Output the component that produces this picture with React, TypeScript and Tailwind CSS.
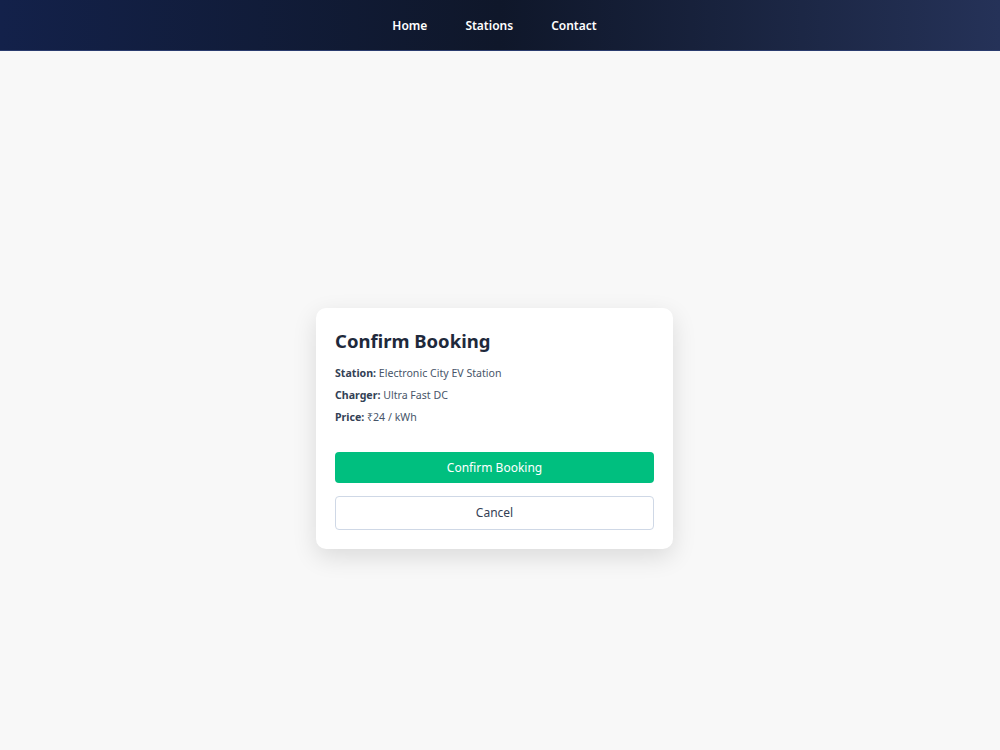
import React from 'react';

const navLinks = ['Home', 'Stations', 'Contact'];

const Navbar: React.FC = () => (
  <header className="h-[51px] w-full bg-gradient-to-r from-[#13214a] via-[#0f172a] to-[#253258] border-b border-[#2a3b6e]">
    <nav className="flex h-full items-center justify-center gap-[38px] pr-[11px] pt-[2px]">
      {navLinks.map((link) => (
        <a key={link} href="#" className="text-[12px] font-semibold text-white">
          {link}
        </a>
      ))}
    </nav>
  </header>
);

const BookingModal: React.FC = () => (
  <div className="w-[357px] rounded-[10px] bg-white p-[19px] shadow-[0_8px_24px_rgba(0,0,0,0.12)]">
    <h2 className="text-[18.5px] font-bold leading-[28px] text-[#1e293b]">Confirm Booking</h2>
    <div className="mt-[7px] text-[10.6px] leading-[22px] text-[#475569]">
      <p>
        <span className="font-bold text-[#334155]">Station:</span> Electronic City EV Station
      </p>
      <p>
        <span className="font-bold text-[#334155]">Charger:</span> Ultra Fast DC
      </p>
      <p>
        <span className="font-bold text-[#334155]">Price:</span> ₹24 / kWh
      </p>
    </div>
    <button className="mt-[24px] h-[31px] w-full rounded-[4px] bg-[#00bf7f] text-[12px] text-white">
      Confirm Booking
    </button>
    <button className="mt-[13px] h-[34px] w-full rounded-[4px] border border-[#cfd8e6] bg-white text-[12px] text-[#334155]">
      Cancel
    </button>
  </div>
);

export default function App() {
  return (
    <div className="flex min-h-[750px] flex-col bg-[#f8f8f8] font-['Noto_Sans',sans-serif]">
      <Navbar />
      <main className="flex flex-1 items-start justify-center pr-[11px] pt-[257px]">
        <BookingModal />
      </main>
    </div>
  );
}
